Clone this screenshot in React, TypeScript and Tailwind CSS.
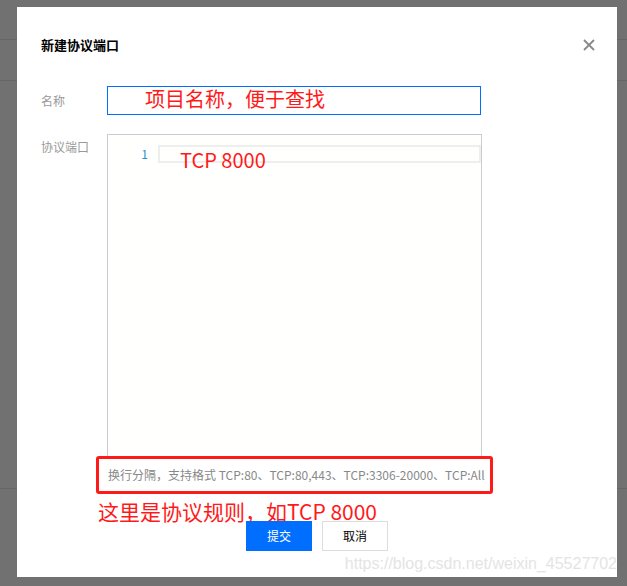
export default function App() {
  const font = { fontFamily: '"Microsoft YaHei", "Noto Sans CJK SC", sans-serif' }
  return (
    <div className="relative w-[627px] h-[586px] bg-[#717171] overflow-hidden" style={font}>
      <div className="absolute left-0 right-0 top-[39px] h-px bg-[#666]" />
      <div className="absolute left-0 right-0 top-[80px] h-px bg-[#666]" />
      <div className="absolute left-0 right-0 top-[488px] h-px bg-[#666]" />
      <div className="absolute left-[17px] top-[7px] w-[600px] h-[570px] bg-white">
        <div className="flex items-center justify-between pl-[24px] pr-[22px] pt-[29px]">
          <h3 className="text-[13px] font-bold text-black leading-[18px]">新建协议端口</h3>
          <svg width="12" height="12" viewBox="0 0 12 12" stroke="#888" strokeWidth="1.8">
            <path d="M1 1L11 11M11 1L1 11" />
          </svg>
        </div>
        <div className="flex mt-[32px] pl-[24px]">
          <span className="w-[66px] text-[12px] text-[#999] leading-[29px]">名称</span>
          <div className="relative w-[374px] h-[29px] border border-[#006eff]">
            <span className="absolute left-[37px] top-[-3px] text-[20px] text-[#ff1a1a]">项目名称，便于查找</span>
          </div>
        </div>
        <div className="flex mt-[19px] pl-[24px]">
          <span className="w-[66px] text-[12px] text-[#999] leading-[26px]">协议端口</span>
          <div className="relative w-[375px] h-[330px] border border-[#ccc] bg-[#fffffd]">
            <div className="flex mt-[10px] items-center">
              <span className="w-[50px] pr-[10px] text-right text-[12px] text-[#2a8fcf] leading-[18px]">1</span>
              <div className="flex-1 h-[18px] border-2 border-[#eee]" />
            </div>
            <span className="absolute left-[72px] top-[10px] text-[20px] text-[#ff1a1a]">TCP 8000</span>
          </div>
        </div>
        <div className="absolute left-[79px] top-[449px] w-[397px] h-[38px] border-[3px] border-[#ff1a1a] rounded-[3px] bg-white flex items-center pl-[9px]">
          <span className="text-[12px] text-[#888] whitespace-nowrap">换行分隔，支持格式 TCP:80、TCP:80,443、TCP:3306-20000、TCP:All</span>
        </div>
        <span className="absolute left-[81px] top-[489px] text-[21px] text-[#ff1a1a] whitespace-nowrap">这里是协议规则，如TCP 8000</span>
        <div className="absolute left-[229px] top-[514px] flex gap-[10px]">
          <button className="w-[66px] h-[30px] bg-[#006eff] text-white text-[12px]">提交</button>
          <button className="w-[66px] h-[30px] border border-[#ddd] bg-white text-black text-[12px]">取消</button>
        </div>
        <span className="absolute right-0 top-[545px] text-[16px] text-[#e4e4e4] whitespace-nowrap" style={{ fontFamily: 'Arial, "Liberation Sans", sans-serif' }}>https://blog.csdn.net/weixin_45527702</span>
      </div>
    </div>
  )
}
